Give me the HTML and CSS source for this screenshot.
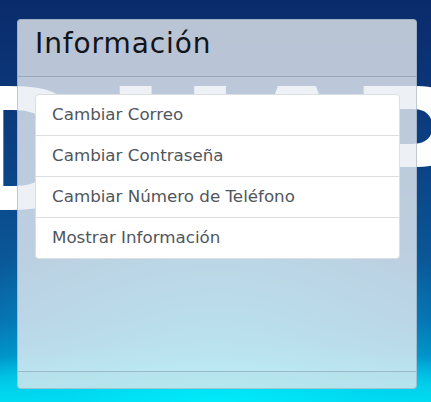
FILE: index.html
```html
<!DOCTYPE html>
<html lang="es">
<head>
<meta charset="utf-8">
<title>Información</title>
<link rel="stylesheet" href="styles.css">
</head>
<body>
<div class="backdrop" aria-hidden="true">
  <span class="word"><span class="ch ch-d">D</span><span class="ch ch-u">U</span><span class="ch ch-a">A</span><span class="ch">P</span></span>
</div>
<main class="card">
  <header class="card-header">
    <h1 class="card-title">Información</h1>
  </header>
  <section class="card-body">
    <ul class="list-group">
      <li class="list-item">Cambiar Correo</li>
      <li class="list-item">Cambiar Contraseña</li>
      <li class="list-item">Cambiar Número de Teléfono</li>
      <li class="list-item">Mostrar Información</li>
    </ul>
  </section>
  <footer class="card-footer"></footer>
</main>
</body>
</html>
```

FILE: styles.css
```css
html, body {
  margin: 0;
  padding: 0;
}

body {
  width: 431px;
  height: 402px;
  overflow: hidden;
  position: relative;
  font-family: "DejaVu Sans", "Liberation Sans", sans-serif;
  background:
    radial-gradient(ellipse 320px 60px at 50% 100%, rgba(0, 238, 250, 0.9) 0%, rgba(0, 225, 245, 0.5) 50%, rgba(0, 210, 240, 0) 100%),
    radial-gradient(ellipse 260px 240px at 50% 100%, rgba(0, 210, 245, 0.75) 0%, rgba(0, 195, 238, 0.35) 55%, rgba(0, 180, 230, 0) 100%),
    linear-gradient(to bottom, #0a2b6b 0%, #0b3577 20%, #0b4688 45%, #0a5898 65%, #066fae 80%, #0090c6 89%, #00c2e2 95%, #00dcef 100%);
}

.backdrop {
  position: absolute;
  left: 0;
  top: 0;
  width: 431px;
  height: 402px;
  overflow: hidden;
  z-index: 0;
}

.word {
  position: absolute;
  left: -44px;
  top: 52px;
  font-family: "DejaVu Sans", sans-serif;
  font-weight: bold;
  font-size: 169px;
  line-height: 200px;
  color: #ffffff;
  white-space: nowrap;
}

.ch-d {
  letter-spacing: 8px;
}

.ch-u {
  letter-spacing: -10px;
}

.ch-a {
  letter-spacing: -14px;
}

.card {
  position: relative;
  z-index: 1;
  box-sizing: border-box;
  margin: 19px 0 0 17px;
  width: 400px;
  height: 370px;
  display: flex;
  flex-direction: column;
  border: 1px solid rgba(120, 140, 160, 0.4);
  border-radius: 4px;
  background: rgba(233, 238, 242, 0.8);
  overflow: hidden;
}

.card-header {
  height: 57px;
  box-sizing: border-box;
  padding: 7px 17px 0;
  border-bottom: 1px solid #97a8ba;
  background: rgba(0, 0, 0, 0.01);
}

.card-title {
  margin: 0;
  font-size: 28px;
  line-height: 34px;
  font-weight: normal;
  letter-spacing: 0.9px;
  color: #111418;
}

.card-body {
  flex: 1;
  padding: 17px 16px 0 17px;
}

.list-group {
  list-style: none;
  margin: 0;
  padding: 0;
  background: #ffffff;
  border: 1px solid #dcdfe2;
  border-radius: 4px;
}

.list-item {
  padding: 7px 16px 9px;
  font-size: 16.7px;
  line-height: 24px;
  color: #50565c;
  border-top: 1px solid #dcdfe2;
}

.list-item:first-child {
  border-top: none;
}

.card-footer {
  height: 16px;
  border-top: 1px solid #9bb9c6;
  background: rgba(0, 0, 0, 0.02);
}
```
